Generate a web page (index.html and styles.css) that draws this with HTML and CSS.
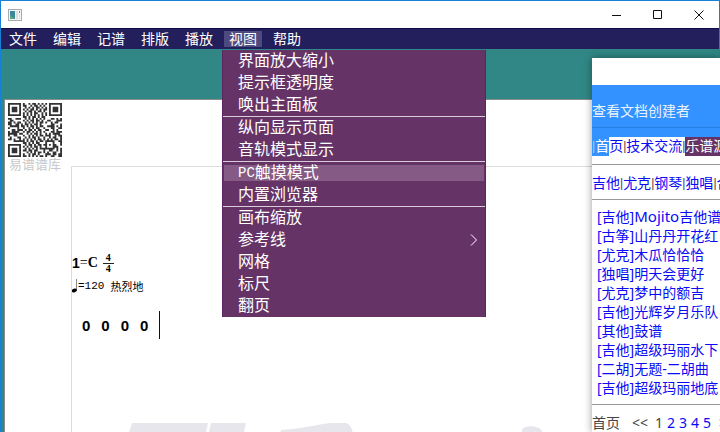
FILE: index.html
```html
<!DOCTYPE html>
<html lang="zh-CN">
<head>
<meta charset="utf-8">
<meta name="viewport" content="width=device-width">
<title>易谱</title>
<link rel="stylesheet" href="styles.css">
</head>
<body>
<div class="window">
  <header class="titlebar">
    <svg class="app-icon" width="14" height="12" viewBox="0 0 14 12" aria-hidden="true">
      <rect x=".5" y=".5" width="13" height="11" fill="#f4f4f4" stroke="#a4adb3"/>
      <rect x="2" y="2" width="5" height="8" fill="#3d879b"/>
      <path d="M2 6l5 4H2z" fill="#55a880"/>
      <path d="M8 2h2v8H8z" fill="#dedede"/>
      <path d="M11 2h1v2h-1z" fill="#4ba079"/>
      <path d="M11 5h1v5h-1z" fill="#e1e1e1"/>
    </svg>
    <div class="controls">
      <button aria-label="最小化"><svg width="10" height="10" viewBox="0 0 10 10"><path d="M0 5.5h9"/></svg></button>
      <button aria-label="最大化"><svg width="10" height="10" viewBox="0 0 10 10"><path d="M.5.5h8v8h-8z"/></svg></button>
      <button aria-label="关闭"><svg width="10" height="10" viewBox="0 0 10 10"><path d="M.5.5l9 9M9.500.5l-9 9"/></svg></button>
    </div>
  </header>
  <nav class="menubar">
    <button>文件</button><button>编辑</button><button>记谱</button><button>排版</button><button>播放</button>
    <div class="menu-holder">
      <button class="open">视图</button>
      <div class="dropdown">
        <button>界面放大缩小</button>
        <button>提示框透明度</button>
        <button>唤出主面板</button>
        <hr>
        <button>纵向显示页面</button>
        <button>音轨模式显示</button>
        <hr>
        <button class="active"><span class="half">PC</span>触摸模式</button>
        <button>内置浏览器</button>
        <hr>
        <button>画布缩放</button>
        <button>参考线<svg class="chevron" width="8" height="12" viewBox="0 0 8 12" aria-hidden="true"><path d="M1 .5L6.500 6 1 11.500"/></svg></button>
        <button>网格</button>
        <button>标尺</button>
        <button>翻页</button>
      </div>
    </div>
    <button>帮助</button>
  </nav>
  <main class="workspace">
    <article class="sheet">
      <figure class="brand">
        <svg id="qr" width="54" height="54" viewBox="0 0 29 29" role="img" aria-label="二维码"></svg>
        <figcaption>易谱谱库</figcaption>
      </figure>
      <section class="score">
        <div class="key"><b class="tonic">1</b>=<b>C</b><span class="meter"><span>4</span><span>4</span></span></div>
        <div class="tempo">
          <svg width="6" height="14" viewBox="0 0 6 14" aria-hidden="true"><path d="M4.500 0v11" stroke="#888" stroke-width="1"/><ellipse cx="2.300" cy="11.500" rx="2.600" ry="1.800" transform="rotate(-20 2.300 11.500)"/></svg>
          <span class="bpm">=120</span><span>热烈地</span>
        </div>
        <div class="measure"><b>0</b><b>0</b><b>0</b><b>0</b></div>
        <svg class="watermark" width="430" height="60" viewBox="0 0 430 60" aria-hidden="true">
          <path d="M5 0h76l-13 59H-14zM84 0h35l-14 59H70zM154 7c22-1 41-7 60-8 7 0 11 4 12 12l-11 48h-74zM395 7c2-5 17-5 20 1v50h-26z"/>
        </svg>
      </section>
    </article>
    <aside class="browser">
      <div class="browser-bar"></div>
      <div class="doc-owner">查看文档创建者</div>
      <nav class="links"><span class="selected">|<a href="#">首</a></span><a href="#">页</a>|<a href="#">技术交流</a>|<a class="source" href="#">乐谱源码</a></nav>
      <nav class="categories"><a href="#">吉他</a>|<a href="#">尤克</a>|<a href="#">钢琴</a>|<a href="#">独唱</a>|<a href="#">合唱</a></nav>
      <ul>
        <li><a href="#">[吉他]<span class="latin">Mojito</span>吉他谱</a></li>
        <li><a href="#">[古筝]山丹丹开花红</a></li>
        <li><a href="#">[尤克]木瓜恰恰恰</a></li>
        <li><a href="#">[独唱]明天会更好</a></li>
        <li><a href="#">[尤克]梦中的额吉</a></li>
        <li><a href="#">[吉他]光辉岁月乐队</a></li>
        <li><a href="#">[其他]鼓谱</a></li>
        <li><a href="#">[吉他]超级玛丽水下</a></li>
        <li><a href="#">[二胡]无题-二胡曲</a></li>
        <li><a href="#">[吉他]超级玛丽地底</a></li>
      </ul>
      <nav class="pager"><span class="first">首页</span><span class="prev">&lt;&lt;</span><span>1</span><a href="#">2</a><a href="#">3</a><a href="#">4</a><a href="#">5</a><a class="next" href="#">&gt;&gt;</a></nav>
    </aside>
  </main>
</div>
<script src="qr.js"></script>
</body>
</html>
```
FILE: qr.js
```js
// Module rows of the code; # is a dark module.
const rows = [
  "#######.#..#.##.#.#.#.#######",
  "#.....#.##..#.##.#.#..#.....#",
  "#.###.#..#.#.#.##.#.#.#.###.#",
  "#.###.#.#.#.##.#.#.##.#.###.#",
  "#.###.#..#.##.#.##.#..#.###.#",
  "#.....#.#.#.#.##..#.#.#.....#",
  "#######.#.#.#.#.#.#.#.#######",
  "........##.#.##.#.##.........",
  "##..###..#.#.#.#.#.#...##.#.#",
  ".##.....#.#.##.##.#..##...###",
  "##.#.##..#.#.#.#.##.#..#.##..",
  "##..##.#.##.#.##.#.....##...#",
  ".#####.##.#.##.#.##..####.#.#",
  "#....#..#..#.#.##..#...##..##",
  "..##.###.#.##.#.##..##..#.#..",
  "#.####..#.##.#.#.#.#...##.###",
  "#####.##..#.#.##.#..#.#.####.",
  "#..##...#..#.#.#.##.###..#.##",
  ".#...##..#.#.##.#..#..#.##..#",
  "##.#..#.#.#.#.#.##.#.#.#.##.#",
  "...######.#.##.#.##.#####..##",
  "........##.#.#.##...#...#...#",
  "#######..#.##.#.##.##.#.##..#",
  "#.....#.#.#.#.##.#..#...###..",
  "#.###.#..#.#.#.#.########.#.#",
  "#.###.#.##.##.##...#..##..#.#",
  "#.###.#...#.#.#.##.#.#..##..#",
  "#.....#.#..#.##.#...###.##.##",
  "#######.##.#.#.#.##.#..##..##"
];
const d = rows.map((row, y) =>
  [...row].map((c, x) => c === "#" ? `M${x} ${y}h1v1h-1z` : "").join("")).join("");
document.getElementById("qr").innerHTML = `<path d="${d}"/>`;
```
FILE: styles.css
```css
* { box-sizing: border-box; }
body {
  margin: 0;
  background: #fff;
  font-family: "Liberation Sans", "Noto Sans CJK SC", sans-serif;
  overflow: hidden;
}
button {
  margin: 0;
  border: 0;
  background: none;
  color: inherit;
  font: inherit;
}
a { text-decoration: none; color: #0a0af5; }
.window {
  display: flex;
  flex-direction: column;
  height: 100vh;
  border: 1px solid #1680d4;
  border-bottom: 0;
}
.titlebar {
  display: flex;
  justify-content: space-between;
  align-items: center;
  flex: 0 0 27px;
  padding-left: 7px;
}
.controls { display: flex; }
.controls button {
  width: 41px;
  height: 26px;
  padding: 0;
  display: grid;
  place-items: center;
}
.controls path { fill: none; stroke: #111; }
.menubar {
  display: flex;
  align-items: center;
  gap: 6px;
  flex: 0 0 21px;
  padding-left: 3px;
  background: #221f5c;
  border-top: 1px solid #100b45;
  color: #fff;
  font-size: 14px;
  line-height: 16px;
}
.menubar button { padding: 0 5px; white-space: nowrap; display: block; }
.menu-holder { position: relative; }
.menubar .open { background: #4d4a80; }
.dropdown {
  position: absolute;
  z-index: 3;
  top: 19px;
  left: -2px;
  width: 264px;
  background: #663366;
  border: solid #5a2560;
  border-width: 0 1px;
  font-size: 16px;
}
.menubar .dropdown button {
  display: flex;
  align-items: center;
  width: 100%;
  height: 22px;
  padding: 0 6px 0 14px;
  border: solid transparent;
  border-width: 3px 1px;
  background-clip: padding-box;
  text-align: left;
}
.dropdown hr {
  height: 1px;
  margin: 0;
  border: 0;
  background: #d9ccd9;
}
.menubar .dropdown .active { background-color: #855b85; }
.half { font-family: "Liberation Mono", monospace; font-size: 14px; }
.chevron { margin-left: auto; }
.chevron path { fill: none; stroke: #fff; }
.workspace {
  position: relative;
  flex: 1;
  min-height: 0;
  padding: 50px 0 0 3px;
  background: #308785;
}
.sheet {
  display: flex;
  height: 100%;
  background: #fff;
  border: solid #8b8d8d;
  border-width: 1px 0 0 1px;
  overflow: hidden;
}
.brand {
  flex: 0 0 66px;
  margin: 0;
  padding: 3px 0 0 3px;
  color: #c8c8c8;
  font-size: 13px;
  line-height: 16px;
}
.brand svg { display: block; fill: #333; }
.brand figcaption { padding-left: 1px; }
.score {
  flex: 1;
  margin-top: 66px;
  padding-top: 86px;
  border: solid #dcdcdc;
  border-width: 1px 0 0 1px;
  overflow: hidden;
}
.key {
  display: flex;
  align-items: center;
  height: 20px;
  font-family: "Liberation Serif", serif;
  font-size: 14px;
}
.tonic { font-family: "Liberation Sans", sans-serif; }
.meter {
  display: flex;
  flex-direction: column;
  margin-left: 5px;
  width: 11px;
  text-align: center;
  font-size: 10px;
  font-weight: bold;
  line-height: 10px;
}
.meter span + span { border-top: 1px solid #222; }
.tempo {
  display: flex;
  align-items: center;
  height: 26px;
  font-size: 11px;
}
.bpm {
  margin-right: 6px;
  font-family: "Liberation Mono", monospace;
}
.measure {
  display: flex;
  align-items: center;
  gap: 11px;
  width: 88px;
  height: 28px;
  margin-top: 12px;
  padding-left: 10px;
  border-right: 1px solid #111;
  font-size: 15px;
}
.watermark {
  display: block;
  margin: 84px 0 0 55px;
  fill: #e7e6ed;
}
.browser {
  position: absolute;
  z-index: 2;
  top: 9px;
  left: 591px;
  right: -1px;
  bottom: 0;
  background: #fff;
  box-shadow: 0 0 8px #0006;
  color: #444;
  font-family: "Noto Sans", "Noto Sans CJK SC", sans-serif;
  font-size: 14px;
  line-height: 19px;
  white-space: nowrap;
  overflow: hidden;
}
.browser-bar { height: 27px; }
.doc-owner {
  height: 43px;
  padding-top: 16px;
  background: #3392ff;
  border-bottom: 1px solid #267fe2;
  color: #eaf4ff;
}
.links, .categories {
  display: flex;
  font-family: "Liberation Sans", "Noto Sans CJK SC", sans-serif;
  font-size: 12px;
  border-bottom: 1px solid #999;
}
.links a, .categories a { font-size: 14px; }
.links {
  height: 37px;
  border-top: 9px solid #3392ff;
  align-items: flex-start;
}
.links .selected {
  display: flex;
  background: #3392ff;
  color: #a8d0ff;
}
.links .selected a { color: #fff; }
.links .source { background: #663366; color: #fff; }
.categories {
  height: 35px;
  padding-top: 9px;
}
.browser ul {
  margin: 0;
  padding: 7px 0 7px 5px;
  list-style: none;
  border-bottom: 1px solid #999;
}
.latin { font-size: 15px; line-height: 1; }
.pager { display: flex; gap: 4px; padding-top: 8px; }
.pager .first { margin-right: 8px; }
.pager .prev { margin-right: 3px; }
.pager .next { margin-left: 4px; }
```
